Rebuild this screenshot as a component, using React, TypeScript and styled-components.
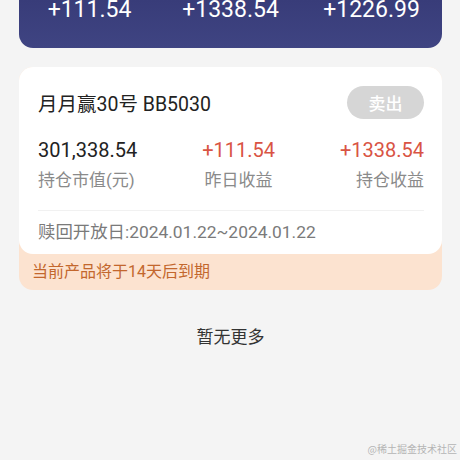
import React from "react";
import styled, { createGlobalStyle } from "styled-components";

const GlobalStyle = createGlobalStyle`
  html, body {
    margin: 0;
    padding: 0;
    background: #f4f4f4;
    font-family: Roboto, "Noto Sans CJK SC", sans-serif;
    overflow: hidden;
  }
`;

const Page = styled.div`
  position: relative;
  width: 460px;
  height: 460px;
  padding: 0 18px 0 19px;
  box-sizing: border-box;
  overflow: hidden;
`;

const SummaryCard = styled.div`
  padding: 0 0 28px;
  border-radius: 0 0 14px 14px;
  background: linear-gradient(180deg, #383c79 0%, #3f4482 100%);
  color: #fff;
`;

const SummaryRow = styled.div`
  display: grid;
  grid-template-columns: repeat(3, 1fr);
  text-align: center;
`;

const SummaryValue = styled.div`
  font-size: 23px;
  line-height: 20px;
`;

const Notice = styled.div`
  margin-top: 19px;
  background: #fce3d0;
  border-radius: 14px;
`;

const Card = styled.div`
  background: #fff;
  border-radius: 14px;
  padding: 18px 18px 10px 19px;
`;

const CardHeader = styled.div`
  display: flex;
  align-items: center;
  justify-content: space-between;
  height: 34px;
`;

const Title = styled.div`
  font-size: 19.5px;
  color: #222;
`;

const SellButton = styled.button`
  width: 77px;
  height: 33px;
  border: none;
  border-radius: 17px;
  background: #d6d6d6;
  color: #fff;
  font-size: 17px;
  font-weight: 500;
  font-family: "Noto Sans CJK SC", sans-serif;
  padding: 0;
`;

const Stats = styled.div`
  display: flex;
  justify-content: space-between;
  margin-top: 18px;
  padding-bottom: 18px;
  border-bottom: 1px solid #f1f1f1;
`;

const Stat = styled.div<{ $align: "left" | "center" | "right" }>`
  display: flex;
  flex-direction: column;
  text-align: ${(p) => p.$align};
`;

const StatValue = styled.div<{ $red?: boolean }>`
  font-size: 20px;
  line-height: 26px;
  color: ${(p) => (p.$red ? "#d95444" : "#222")};
`;

const StatLabel = styled.div`
  font-size: 17px;
  line-height: 24px;
  margin-top: 5px;
  color: #8a8a8a;
`;

const Redeem = styled.div`
  padding-top: 9px;
  font-size: 17.4px;
  line-height: 24px;
  color: #7a7a7a;
`;

const NoticeText = styled.div`
  padding: 7px 13px 7px;
  font-size: 16px;
  line-height: 22px;
  color: #c3672d;
`;

const NoMore = styled.div`
  margin-top: 35px;
  text-align: center;
  font-size: 17px;
  line-height: 24px;
  color: #333;
`;

const Watermark = styled.div`
  position: absolute;
  right: 3px;
  bottom: 4px;
  font-size: 10px;
  color: #b4b4b4;
  font-family: "Noto Sans CJK SC", serif;
`;

const summary = ["+111.54", "+1338.54", "+1226.99"];

export default function App() {
  return (
    <>
      <GlobalStyle />
      <Page>
        <SummaryCard>
          <SummaryRow>
            {summary.map((v) => (
              <SummaryValue key={v}>{v}</SummaryValue>
            ))}
          </SummaryRow>
        </SummaryCard>

        <Notice>
          <Card>
            <CardHeader>
              <Title>月月赢30号 BB5030</Title>
              <SellButton>卖出</SellButton>
            </CardHeader>
            <Stats>
              <Stat $align="left">
                <StatValue>301,338.54</StatValue>
                <StatLabel>持仓市值(元)</StatLabel>
              </Stat>
              <Stat $align="center">
                <StatValue $red>+111.54</StatValue>
                <StatLabel>昨日收益</StatLabel>
              </Stat>
              <Stat $align="right">
                <StatValue $red>+1338.54</StatValue>
                <StatLabel>持仓收益</StatLabel>
              </Stat>
            </Stats>
            <Redeem>赎回开放日:2024.01.22~2024.01.22</Redeem>
          </Card>
          <NoticeText>当前产品将于14天后到期</NoticeText>
        </Notice>

        <NoMore>暂无更多</NoMore>
        <Watermark>@稀土掘金技术社区</Watermark>
      </Page>
    </>
  );
}
